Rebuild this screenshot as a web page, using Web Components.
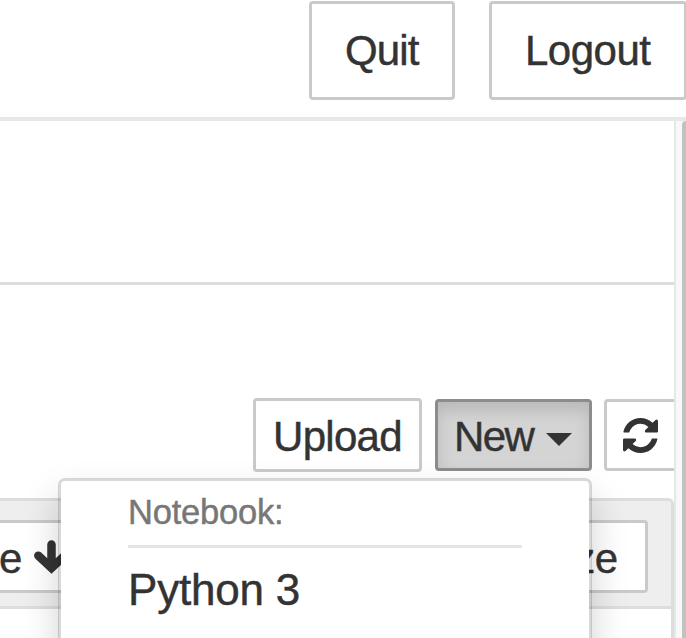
<!DOCTYPE html>
<html lang="en"><head><meta charset="utf-8"><title>Notebook files</title>
<style>
html,body{margin:0;height:100%;overflow:hidden;background:#fff}
body{font-family:"Liberation Sans",Arial,sans-serif;color:#333;-webkit-text-stroke:.45px currentColor}
</style></head><body>
<file-browser></file-browser>
<script>
const define=(name,html)=>customElements.define(name,class extends HTMLElement{
  constructor(){super();const t=document.createElement('template');t.innerHTML=html;
    this.attachShadow({mode:'open'}).append(t.content.cloneNode(true));}
});

define('ui-button',`<style>
:host{display:flex;box-sizing:border-box;flex:none;border:3px solid #cacaca;border-radius:4px;background:#fff;
  padding:var(--pt,12px) 0 0 var(--pl,17px);font-size:42px;line-height:48px;letter-spacing:var(--ls,-.5px);white-space:nowrap}
:host([pressed]){background:#d4d4d4;border-color:#8c8c8c;box-shadow:inset 0 9px 15px rgba(0,0,0,.125)}
</style><slot></slot>`);

define('icon-caret',`<style>:host{display:block;flex:none;width:26px;height:13px}svg{display:block}</style>
<svg width="26" height="13" viewBox="0 0 26 13"><path d="M0 0h26L13 13z" fill="#333"/></svg>`);

define('icon-refresh',`<style>:host{display:block;flex:none;width:35px;height:35px}svg{display:block}</style>
<svg width="35" height="35" viewBox="0 0 1536 1536"><path fill="#333" d="M1511 928q0 5-1 7-64 268-268 434.500T764 1536q-146 0-282.500-55T238 1324l-129 129q-19 19-45 19t-45-19-19-45V960q0-26 19-45t45-19h448q26 0 45 19t19 45-19 45l-137 137q71 66 161 102t187 36q134 0 250-65t186-179q11-17 53-117 8-23 30-23h192q13 0 22.500 9.500t9.500 22.500zM1536 128v448q0 26-19 45t-45 19h-448q-26 0-45-19t-19-45 19-45l138-138Q969 256 768 256q-134 0-250 65T332 500q-11 17-53 117-8 23-30 23H50q-13 0-22.500-9.500T18 608v-7q65-268 270-434.500T768 0q146 0 284 55.500T1297 212l130-129q19-19 45-19t45 19 19 45z"/></svg>`);

define('icon-down',`<style>:host{display:block;flex:none;width:36px;height:34px}svg{display:block}</style>
<svg width="36" height="34" viewBox="0 0 36 34"><path d="M17.500 4.500V28M4.300 15.700L17.500 28L30.700 15.700" fill="none" stroke="#333" stroke-width="8.500" stroke-linecap="round" stroke-linejoin="miter"/></svg>`);

define('top-bar',`<style>
:host{display:flex;box-sizing:border-box;flex:none;height:121px;border-bottom:4px solid #e7e7e7;padding:1px 0 0 309px;gap:34px}
ui-button{height:99px;--pt:23px;--pl:33px}
.quit{width:146px;--ls:-.9px}.logout{width:198px}
</style><ui-button class="quit">Quit</ui-button><ui-button class="logout">Logout</ui-button>`);

define('tool-bar',`<style>
:host{display:flex;flex:none;align-items:flex-start;height:100px;padding:113px 0 0 253px}
ui-button{height:72px}
.up{width:169px;height:74px;margin-right:13px;--ls:-.7px}
.new{width:157px;height:72px;margin:1px 12px 0 0;--pt:11px;--pl:16px;--ls:-1.6px}
.re{width:90px;margin-top:1px;--pt:16px;--pl:16px}
icon-caret{margin:20px 0 0 13px}
</style><ui-button class="up">Upload</ui-button><ui-button class="new" pressed>New<icon-caret></icon-caret></ui-button><ui-button class="re"><icon-refresh></icon-refresh></ui-button>`);

define('file-list',`<style>
:host{display:flex;flex-direction:column;flex:1;box-sizing:border-box;border:solid #ddd;border-width:3px 3px 0 0;border-radius:0 6px 0 0}
.head{display:flex;justify-content:space-between;box-sizing:border-box;height:108px;background:#eee;border-bottom:3px solid #ddd;border-radius:0 3px 0 0;padding:19px 23px 0 0}
ui-button{height:73px}
.name{width:100px;margin-left:-4px;--pl:0}
.size{width:120px;--pl:7px}
icon-down{margin:5px 0 0 12px}
</style><div class="head"><ui-button class="name">e<icon-down></icon-down></ui-button><ui-button class="size">Size</ui-button></div>`);

define('scroll-rail',`<style>
:host{display:flex;box-sizing:border-box;flex:none;width:12px;border-left:2px solid #e7e7e7;background:#f8f8f8;padding-left:6px}
i{flex:1;background:#c1c1c1;border-radius:4px 0 0 0}
</style><i></i>`);

define('new-menu',`<style>
:host{position:absolute;left:58px;top:478px;width:534px;height:220px;box-sizing:border-box;border:3px solid rgba(0,0,0,.15);border-radius:7px;background:#fff;background-clip:padding-box;box-shadow:0 18px 36px rgba(0,0,0,.175);padding:11px 67px 0}
h6{margin:0;height:53px;font:34.500px/40px "Liberation Sans",Arial,sans-serif;color:#777;letter-spacing:-.2px}
hr{margin:0;border:0;height:3px;background:#e5e5e5}
p{margin:17px 0 0;font-size:44px;line-height:50px;letter-spacing:-.2px}
</style><h6>Notebook:</h6><hr><p>Python 3</p>`);

define('file-browser',`<style>
:host{display:flex;flex-direction:column;position:relative;width:686px;height:638px;overflow:hidden}
.body{display:flex;flex:1;min-height:0}
main{display:flex;flex-direction:column;width:674px;flex:none;overflow:hidden}
.tabs{flex:none;height:161px;border-bottom:3px solid #ddd}
</style><top-bar></top-bar><div class="body"><main><div class="tabs"></div><tool-bar></tool-bar><file-list></file-list></main><scroll-rail></scroll-rail></div><new-menu></new-menu>`);
</script></body></html>
